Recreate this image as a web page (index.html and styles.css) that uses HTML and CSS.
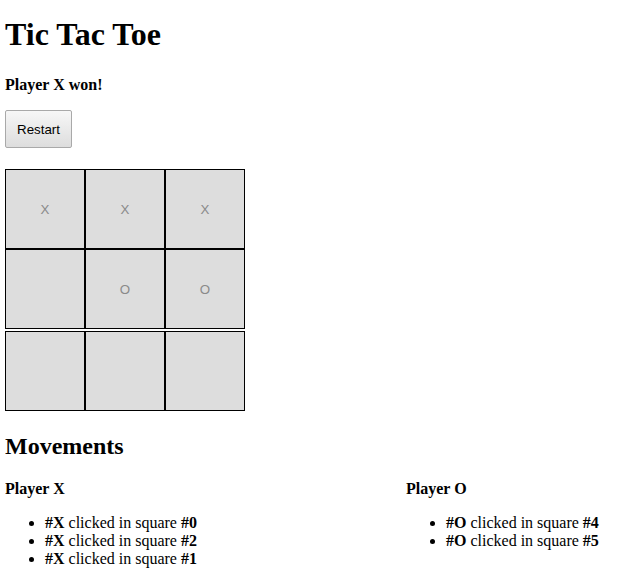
FILE: index.html
```html
<!DOCTYPE html>
<html>
<head>
<meta charset="utf-8">
<title>Tic Tac Toe</title>
<link rel="stylesheet" href="styles.css">
</head>
<body>
<h1 class="title">Tic Tac Toe</h1>
<h4 class="status">Player X won!</h4>
<button class="restart">Restart</button>
<div class="board">
  <div class="row">
    <button class="cell" disabled>X</button><button class="cell" disabled>X</button><button class="cell" disabled>X</button>
  </div>
  <div class="row">
    <button class="cell" disabled></button><button class="cell" disabled>O</button><button class="cell" disabled>O</button>
  </div>
  <div class="row row-last">
    <button class="cell" disabled></button><button class="cell" disabled></button><button class="cell" disabled></button>
  </div>
</div>
<h2 class="movements">Movements</h2>
<div class="players">
  <div class="player player-x">
    <h4 class="player-name">Player X</h4>
    <ul class="moves">
      <li><b>#X</b> clicked in square <b>#0</b></li>
      <li><b>#X</b> clicked in square <b>#2</b></li>
      <li><b>#X</b> clicked in square <b>#1</b></li>
    </ul>
  </div>
  <div class="player player-o">
    <h4 class="player-name">Player O</h4>
    <ul class="moves">
      <li><b>#O</b> clicked in square <b>#4</b></li>
      <li><b>#O</b> clicked in square <b>#5</b></li>
    </ul>
  </div>
</div>
</body>
</html>
```
FILE: styles.css
```css
html, body {
  background: #fff;
}
body {
  margin: 5px;
  font-family: "Liberation Serif", "Times New Roman", serif;
  font-size: 16px;
  color: #000;
}
.title {
  font-size: 32px;
  font-weight: bold;
  margin: 11px 0 23px;
}
.status {
  font-size: 16px;
  margin: 21px 0 16px;
}
.restart {
  display: block;
  font-family: "Liberation Sans", Arial, sans-serif;
  font-size: 13.33px;
  color: #000;
  width: 67px;
  height: 38px;
  padding: 0;
  border: 1px solid #a9a9a9;
  border-radius: 2px;
  background: linear-gradient(#f7f7f7, #dddddd);
}
.board {
  margin-top: 21px;
  width: 240px;
}
.row {
  display: flex;
}
.row-last {
  margin-top: 2px;
}
.cell {
  width: 80px;
  height: 80px;
  padding: 0;
  margin: 0;
  border: 1px solid #000;
  background: #dddddd;
  color: #8a8a8a;
  font-family: "Liberation Sans", Arial, sans-serif;
  font-size: 13.33px;
}
.movements {
  font-size: 24px;
  margin: 22px 0 20px;
}
.players {
  display: flex;
}
.player-x {
  width: 401px;
}
.player-name {
  font-size: 16px;
  margin: 0 0 16px;
}
.moves {
  margin: 0;
  padding-left: 40px;
  line-height: 18px;
}
```
